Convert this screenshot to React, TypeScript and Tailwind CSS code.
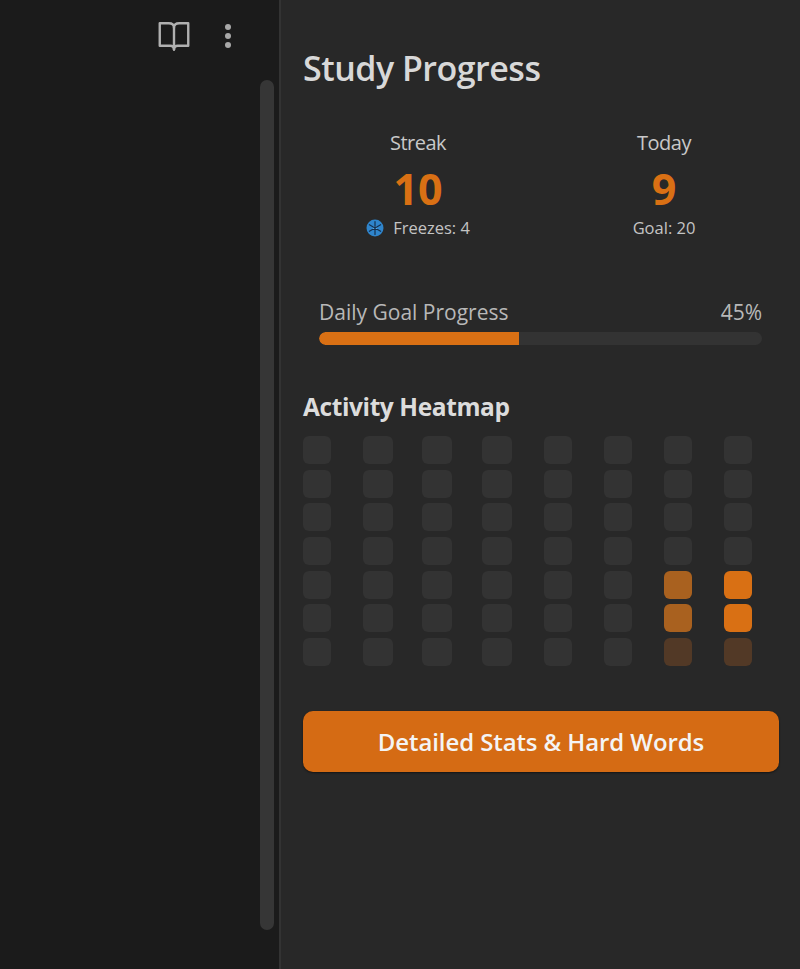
const rows = 7
const cols = 8

function cellColor(col: number, row: number) {
  if (col === 7 && (row === 4 || row === 5)) return 'bg-[#d97014]'
  if (col === 6 && (row === 4 || row === 5)) return 'bg-[#a9611f]'
  if (col >= 6 && row === 6) return 'bg-[#523926]'
  return 'bg-[#333333]'
}

function Snowflake() {
  return (
    <svg width="18" height="18" viewBox="0 0 18 18" className="shrink-0">
      <circle cx="9" cy="9" r="8.5" fill="#2f85cc" />
      <circle cx="9" cy="9" r="2.2" fill="#5aa9e6" />
      <g stroke="#14304f" strokeWidth="1.2" strokeLinecap="round">
        <path d="M9 2.500v13M3.400 5.750l11.200 6.500M3.400 12.250l11.200-6.500" />
      </g>
    </svg>
  )
}

function BookIcon() {
  return (
    <svg width="36" height="36" viewBox="0 0 24 24" fill="none" stroke="#b0b0b0" strokeWidth="1.6" strokeLinejoin="round" strokeLinecap="round">
      <path d="M2.500 3.500h6q3.500 0 3.500 3q0-3 3.500-3h6v15h-7q-2.500 0-2.500 2.500q0-2.500-2.500-2.500h-7z" />
      <path d="M12 6.500V21" />
    </svg>
  )
}

export default function App() {
  return (
    <div className="flex h-[969px] w-[800px] overflow-hidden bg-[#282828] font-['Open_Sans','Noto_Sans',sans-serif] text-[#c9c9c9]">
      <div className="flex w-[279px] shrink-0 flex-col bg-[#1b1b1b]">
        <div className="flex h-[80px] items-start justify-end gap-[33px] pt-[18px] pr-[48px]">
          <BookIcon />
          <div className="flex h-[36px] w-[6px] flex-col items-center justify-center gap-[3px]">
            <span className="h-[6px] w-[6px] rounded-full bg-[#a8a8a8]" />
            <span className="h-[6px] w-[6px] rounded-full bg-[#a8a8a8]" />
            <span className="h-[6px] w-[6px] rounded-full bg-[#a8a8a8]" />
          </div>
        </div>
        <div className="ml-[260px] h-[850px] w-[14px] rounded-full bg-[#363636]" />
      </div>
      <div className="w-[2px] shrink-0 bg-[#333333]" />

      <div className="flex-1 pl-[22px] pr-[21px] pt-[47px]">
        <h1 className="text-[34px] leading-[43px] font-semibold tracking-[-0.5px] text-[#d8d8d8]">Study Progress</h1>

        <div className="mt-[40px] flex">
          <div className="flex w-[230px] flex-col items-center">
            <div className="text-[20px] leading-[26px] tracking-[-0.5px]">Streak</div>
            <div className="mt-[8px] text-[43px] leading-[50px] font-bold text-[#d97014]">10</div>
            <div className="mt-[4px] flex items-center gap-[9px] text-[16.5px] leading-[20px] text-[#c4c4c4]">
              <Snowflake />
              Freezes: 4
            </div>
          </div>
          <div className="ml-[16px] flex w-[230px] flex-col items-center">
            <div className="text-[20px] leading-[26px] tracking-[-0.5px]">Today</div>
            <div className="mt-[8px] text-[43px] leading-[50px] font-bold text-[#d97014]">9</div>
            <div className="mt-[4px] text-[16.5px] leading-[20px] text-[#c4c4c4]">Goal: 20</div>
          </div>
        </div>

        <div className="mt-[60px] mr-[17px] ml-[16px]">
          <div className="flex items-center justify-between text-[21px] leading-[28px] text-[#b8b8b8]">
            <span>Daily Goal Progress</span>
            <span>45%</span>
          </div>
          <div className="mt-[6px] h-[13px] overflow-hidden rounded-full bg-[#333333]">
            <div className="h-full w-[45.2%] rounded-l-full bg-[#d97014]" />
          </div>
        </div>

        <h2 className="mt-[46px] text-[24.5px] leading-[31px] font-bold tracking-[-0.4px] text-[#dcdcdc]">Activity Heatmap</h2>

        <div className="mt-[14px] flex flex-col gap-[5.7px]">
          {Array.from({ length: rows }).map((_, row) => (
            <div key={row} className="grid grid-cols-[60px_59px_60px_62px_60px_60px_60px_28px]">
              {Array.from({ length: cols }).map((_, col) => (
                <div
                  key={col}
                  className={`h-[28px] rounded-[6px] ${col >= 1 && col <= 3 ? 'w-[30px]' : 'w-[28px]'} ${cellColor(col, row)}`}
                />
              ))}
            </div>
          ))}
        </div>

        <button className="mt-[45px] h-[61px] w-[476px] rounded-[10px] bg-[#d56b14] text-[24px] font-semibold tracking-[-0.1px] text-[#f4f4f4] shadow-[0_1px_2px_rgba(0,0,0,0.5)]">
          Detailed Stats &amp; Hard Words
        </button>
      </div>
    </div>
  )
}
